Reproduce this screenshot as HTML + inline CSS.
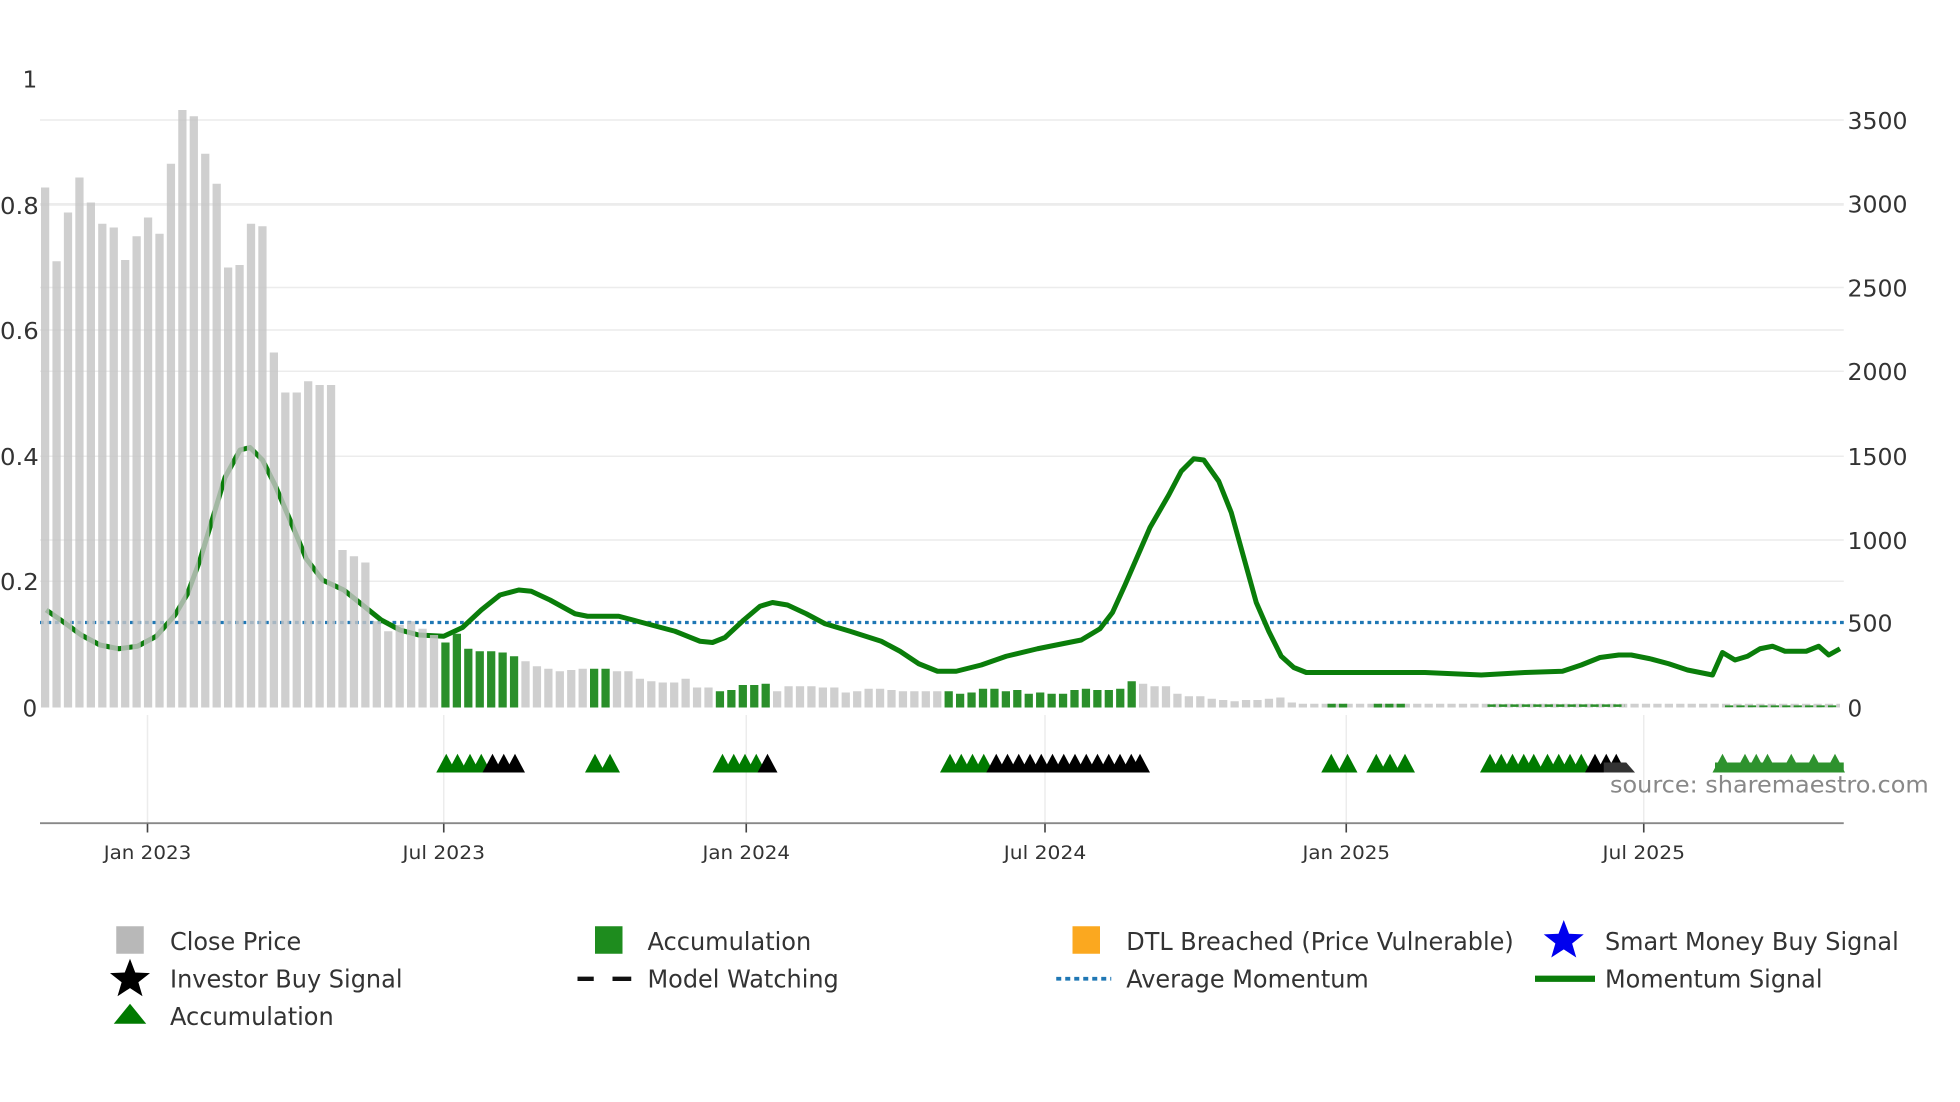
<!DOCTYPE html>
<html><head><meta charset="utf-8"><style>
html,body{margin:0;padding:0;background:#fff;}
svg{display:block;}
text{font-family:"DejaVu Sans","Liberation Sans",sans-serif;fill:#333;}
</style></head><body>
<svg width="1960" height="1102" viewBox="0 0 1568 881.6" preserveAspectRatio="none" xmlns="http://www.w3.org/2000/svg">
<rect width="1568" height="882" fill="#fff"/>
<g stroke="#ececec" stroke-width="1.2">
<line x1="32" x2="1475" y1="96" y2="96"/><line x1="32" x2="1475" y1="163" y2="163"/><line x1="32" x2="1475" y1="230" y2="230"/><line x1="32" x2="1475" y1="297" y2="297"/><line x1="32" x2="1475" y1="365" y2="365"/><line x1="32" x2="1475" y1="432" y2="432"/>
<line x1="32" x2="1475" y1="164" y2="164"/><line x1="32" x2="1475" y1="264" y2="264"/><line x1="32" x2="1475" y1="465" y2="465"/>
<line x1="118" x2="118" y1="572" y2="658"/><line x1="355" x2="355" y1="572" y2="658"/><line x1="597" x2="597" y1="572" y2="658"/><line x1="836" x2="836" y1="572" y2="658"/><line x1="1077" x2="1077" y1="572" y2="658"/><line x1="1315" x2="1315" y1="572" y2="658"/>
</g>
<line x1="32" x2="1475" y1="498" y2="498" stroke="#1f77b4" stroke-width="2.6" stroke-dasharray="3,3"/>
<polyline fill="none" stroke="#0a7d0a" stroke-width="4" stroke-linejoin="round" points="37,488 50,497 65,508 80,516 95,519 110,517 125,509 140,492 150,475 160,448 170,415 180,382 192,360 200,358 210,368 220,388 232,416 245,447 258,464 275,472 290,484 305,496 320,504 335,508 355,509 370,502 385,488 400,476 415,472 425,473 440,480 460,491 470,493 495,493 510,497 540,505 560,513 570,514 580,510 595,496 608,485 618,482 630,484 645,491 660,499 680,505 705,513 720,521 735,531 750,537 765,537 785,532 805,525 830,519 850,515 865,512 880,503 890,490 900,468 910,445 920,422 935,396 945,377 955,367 963,368 975,385 985,410 995,446 1005,482 1015,505 1025,525 1035,534 1045,538 1060,538 1100,538 1140,538 1185,540 1220,538 1250,537 1265,532 1280,526 1295,524 1305,524 1320,527 1335,531 1350,536 1370,540 1378,522 1388,528 1398,525 1408,519 1418,517 1428,521 1445,521 1455,517 1463,524 1472,519"/>
<path fill="#c4c4c4" fill-opacity="0.82" d="M32.8,566 v-416 h6.6 v416 m2.55,0 v-357 h6.6 v357 m2.55,0 v-396 h6.6 v396 m2.55,0 v-424 h6.6 v424 m2.55,0 v-404 h6.6 v404 m2.55,0 v-387 h6.6 v387 m2.55,0 v-384 h6.6 v384 m2.55,0 v-358 h6.6 v358 m2.55,0 v-377 h6.6 v377 m2.55,0 v-392 h6.6 v392 m2.55,0 v-379 h6.6 v379 m2.55,0 v-435 h6.6 v435 m2.55,0 v-478 h6.6 v478 m2.55,0 v-473 h6.6 v473 m2.55,0 v-443 h6.6 v443 m2.55,0 v-419 h6.6 v419 m2.55,0 v-352 h6.6 v352 m2.55,0 v-354 h6.6 v354 m2.55,0 v-387 h6.6 v387 m2.55,0 v-385 h6.6 v385 m2.55,0 v-284 h6.6 v284 m2.55,0 v-252 h6.6 v252 m2.55,0 v-252 h6.6 v252 m2.55,0 v-261 h6.6 v261 m2.55,0 v-258 h6.6 v258 m2.55,0 v-258 h6.6 v258 m2.55,0 v-126 h6.6 v126 m2.55,0 v-121 h6.6 v121 m2.55,0 v-116 h6.6 v116 m2.55,0 v-69 h6.6 v69 m2.55,0 v-61 h6.6 v61 m2.55,0 v-66 h6.6 v66 m2.55,0 v-69 h6.6 v69 m2.55,0 v-63 h6.6 v63 m2.55,0 v-58 h6.6 v58
M417.1,566 v-37 h6.6 v37 m2.55,0 v-33 h6.6 v33 m2.55,0 v-31 h6.6 v31 m2.55,0 v-29 h6.6 v29 m2.55,0 v-30 h6.6 v30 m2.55,0 v-31 h6.6 v31
M490.3,566 v-29 h6.6 v29 m2.55,0 v-29 h6.6 v29 m2.55,0 v-23 h6.6 v23 m2.55,0 v-21 h6.6 v21 m2.55,0 v-20 h6.6 v20 m2.55,0 v-20 h6.6 v20 m2.55,0 v-23 h6.6 v23 m2.55,0 v-16 h6.6 v16 m2.55,0 v-16 h6.6 v16
M618.4,566 v-13 h6.6 v13 m2.55,0 v-17 h6.6 v17 m2.55,0 v-17 h6.6 v17 m2.55,0 v-17 h6.6 v17 m2.55,0 v-16 h6.6 v16 m2.55,0 v-16 h6.6 v16 m2.55,0 v-12 h6.6 v12 m2.55,0 v-13 h6.6 v13 m2.55,0 v-15 h6.6 v15 m2.55,0 v-15 h6.6 v15 m2.55,0 v-14 h6.6 v14 m2.55,0 v-13 h6.6 v13 m2.55,0 v-13 h6.6 v13 m2.55,0 v-13 h6.6 v13 m2.55,0 v-13 h6.6 v13
M911.2,566 v-19 h6.6 v19 m2.55,0 v-17 h6.6 v17 m2.55,0 v-17 h6.6 v17 m2.55,0 v-11 h6.6 v11 m2.55,0 v-9 h6.6 v9 m2.55,0 v-9 h6.6 v9 m2.55,0 v-7 h6.6 v7 m2.55,0 v-6 h6.6 v6 m2.55,0 v-5 h6.6 v5 m2.55,0 v-6 h6.6 v6 m2.55,0 v-6 h6.6 v6 m2.55,0 v-7 h6.6 v7 m2.55,0 v-8 h6.6 v8 m2.55,0 v-4 h6.6 v4"/>
<line x1="1039" x2="1472" y1="564.5" y2="564.5" stroke="#cfcfcf" stroke-width="3" stroke-dasharray="6.6,2.55"/>
<path fill="#2a8f2a" d="M353.05,566 v-52 h6.6 v52 m2.55,0 v-59 h6.6 v59 m2.55,0 v-47 h6.6 v47 m2.55,0 v-45 h6.6 v45 m2.55,0 v-45 h6.6 v45 m2.55,0 v-44 h6.6 v44 m2.55,0 v-41 h6.6 v41
M472,566 v-31 h6.6 v31 m2.55,0 v-31 h6.6 v31
M572.65,566 v-13 h6.6 v13 m2.55,0 v-14 h6.6 v14 m2.55,0 v-18 h6.6 v18 m2.55,0 v-18 h6.6 v18 m2.55,0 v-19 h6.6 v19
M755.65,566 v-13 h6.6 v13 m2.55,0 v-11 h6.6 v11 m2.55,0 v-12 h6.6 v12 m2.55,0 v-15 h6.6 v15 m2.55,0 v-15 h6.6 v15 m2.55,0 v-13 h6.6 v13 m2.55,0 v-14 h6.6 v14 m2.55,0 v-11 h6.6 v11 m2.55,0 v-12 h6.6 v12 m2.55,0 v-11 h6.6 v11 m2.55,0 v-11 h6.6 v11 m2.55,0 v-14 h6.6 v14 m2.55,0 v-15 h6.6 v15 m2.55,0 v-14 h6.6 v14 m2.55,0 v-14 h6.6 v14 m2.55,0 v-15 h6.6 v15 m2.55,0 v-21 h6.6 v21"/>
<g stroke="#2a8f2a" stroke-width="3" stroke-dasharray="6.6,2.55">
<line x1="1062" x2="1080" y1="564.5" y2="564.5"/><line x1="1099" x2="1126" y1="564.5" y2="564.5"/><line x1="1190" x2="1300" y1="564.5" y2="564.5" stroke-width="2"/><line x1="1380" x2="1470" y1="565" y2="565" stroke-width="1.5"/>
</g>
<defs><polygon id="t" points="-8,618 0,603 8,618"/></defs>
<g fill="#007a00">
<use href="#t" x="357"/><use href="#t" x="366"/><use href="#t" x="376"/><use href="#t" x="385"/>
<use href="#t" x="476"/><use href="#t" x="488"/>
<use href="#t" x="578"/><use href="#t" x="587"/><use href="#t" x="596"/><use href="#t" x="605"/>
<use href="#t" x="760"/><use href="#t" x="769"/><use href="#t" x="778"/><use href="#t" x="787"/>
<use href="#t" x="1065"/><use href="#t" x="1078"/>
<use href="#t" x="1101"/><use href="#t" x="1112"/><use href="#t" x="1124"/>
<use href="#t" x="1192"/><use href="#t" x="1201"/><use href="#t" x="1210"/><use href="#t" x="1219"/><use href="#t" x="1227"/><use href="#t" x="1238"/><use href="#t" x="1247"/><use href="#t" x="1256"/><use href="#t" x="1265"/>
</g>
<g fill="#000">
<use href="#t" x="394"/><use href="#t" x="403"/><use href="#t" x="412"/>
<use href="#t" x="614"/>
<use href="#t" x="797"/><use href="#t" x="806"/><use href="#t" x="815"/><use href="#t" x="824"/><use href="#t" x="833"/><use href="#t" x="842"/><use href="#t" x="851"/><use href="#t" x="860"/><use href="#t" x="869"/><use href="#t" x="878"/><use href="#t" x="887"/><use href="#t" x="896"/><use href="#t" x="905"/><use href="#t" x="912"/>
<use href="#t" x="1276"/><use href="#t" x="1285"/>
</g>
<use href="#t" x="1293" fill="#000"/>
<polygon points="1283,618 1283,610 1301,610 1308,618" fill="#333"/>
<g fill="#2e922e">
<use href="#t" x="1378"/><use href="#t" x="1396"/><use href="#t" x="1405"/><use href="#t" x="1414"/><use href="#t" x="1433"/><use href="#t" x="1451"/><use href="#t" x="1468"/>
<rect x="1372" y="610" width="103" height="8"/>
</g>
<text x="1288" y="634" font-size="18.5" style="fill:#888" textLength="255" lengthAdjust="spacingAndGlyphs">source: sharemaestro.com</text>
<line x1="32" x2="1475" y1="658.5" y2="658.5" stroke="#888" stroke-width="1.5"/>
<g stroke="#444" stroke-width="1.3"><line x1="118" x2="118" y1="659" y2="666"/><line x1="355" x2="355" y1="659" y2="666"/><line x1="597" x2="597" y1="659" y2="666"/><line x1="836" x2="836" y1="659" y2="666"/><line x1="1077" x2="1077" y1="659" y2="666"/><line x1="1315" x2="1315" y1="659" y2="666"/></g>
<g font-size="15" text-anchor="middle">
<text x="118" y="687" textLength="70" lengthAdjust="spacingAndGlyphs">Jan 2023</text>
<text x="355" y="687" textLength="66" lengthAdjust="spacingAndGlyphs">Jul 2023</text>
<text x="597" y="687" textLength="70" lengthAdjust="spacingAndGlyphs">Jan 2024</text>
<text x="836" y="687" textLength="66" lengthAdjust="spacingAndGlyphs">Jul 2024</text>
<text x="1077" y="687" textLength="70" lengthAdjust="spacingAndGlyphs">Jan 2025</text>
<text x="1315" y="687" textLength="66" lengthAdjust="spacingAndGlyphs">Jul 2025</text>
</g>
<g font-size="18.5">
<text x="18" y="70">1</text>
<text x="0" y="171" textLength="31" lengthAdjust="spacingAndGlyphs">0.8</text>
<text x="0" y="271" textLength="31" lengthAdjust="spacingAndGlyphs">0.6</text>
<text x="0" y="372" textLength="31" lengthAdjust="spacingAndGlyphs">0.4</text>
<text x="0" y="472" textLength="31" lengthAdjust="spacingAndGlyphs">0.2</text>
<text x="18" y="573">0</text>
<text x="1478" y="103" textLength="48" lengthAdjust="spacingAndGlyphs">3500</text>
<text x="1478" y="170" textLength="48" lengthAdjust="spacingAndGlyphs">3000</text>
<text x="1478" y="237" textLength="48" lengthAdjust="spacingAndGlyphs">2500</text>
<text x="1478" y="304" textLength="48" lengthAdjust="spacingAndGlyphs">2000</text>
<text x="1478" y="372" textLength="48" lengthAdjust="spacingAndGlyphs">1500</text>
<text x="1478" y="439" textLength="48" lengthAdjust="spacingAndGlyphs">1000</text>
<text x="1478" y="505" textLength="36" lengthAdjust="spacingAndGlyphs">500</text>
<text x="1478" y="573">0</text>
</g>
<rect x="93" y="741" width="22" height="22" fill="#b8b8b8"/>
<rect x="476" y="741" width="22" height="22" fill="#1e8c1e"/>
<rect x="858" y="741" width="22" height="22" fill="#fba81f"/>
<polygon fill="#0000ee" points="1251,736 1255.2,747 1267,747.5 1257.7,754.8 1261,766 1251,759.5 1241,766 1244.3,754.8 1235,747.5 1246.8,747"/>
<polygon fill="#000" points="104,767 108.2,778 120,778.5 110.7,785.8 114,797 104,790.5 94,797 97.3,785.8 88,778.5 99.8,778"/>
<polygon fill="#007a00" points="91,819 104,803 117,819"/>
<g stroke="#111" stroke-width="3.5"><line x1="462" x2="475" y1="783" y2="783"/><line x1="490" x2="505" y1="783" y2="783"/></g>
<line x1="845" x2="889" y1="783" y2="783" stroke="#1f77b4" stroke-width="3" stroke-dasharray="4,3.2"/>
<line x1="1228" x2="1276" y1="783" y2="783" stroke="#0a7d0a" stroke-width="5"/>
<g font-size="20">
<text x="136" y="760" textLength="105" lengthAdjust="spacingAndGlyphs">Close Price</text>
<text x="136" y="790" textLength="186" lengthAdjust="spacingAndGlyphs">Investor Buy Signal</text>
<text x="136" y="820" textLength="131" lengthAdjust="spacingAndGlyphs">Accumulation</text>
<text x="518" y="760" textLength="131" lengthAdjust="spacingAndGlyphs">Accumulation</text>
<text x="518" y="790" textLength="153" lengthAdjust="spacingAndGlyphs">Model Watching</text>
<text x="901" y="760" textLength="310" lengthAdjust="spacingAndGlyphs">DTL Breached (Price Vulnerable)</text>
<text x="901" y="790" textLength="194" lengthAdjust="spacingAndGlyphs">Average Momentum</text>
<text x="1284" y="760" textLength="235" lengthAdjust="spacingAndGlyphs">Smart Money Buy Signal</text>
<text x="1284" y="790" textLength="174" lengthAdjust="spacingAndGlyphs">Momentum Signal</text>
</g>
</svg>
</body></html>
